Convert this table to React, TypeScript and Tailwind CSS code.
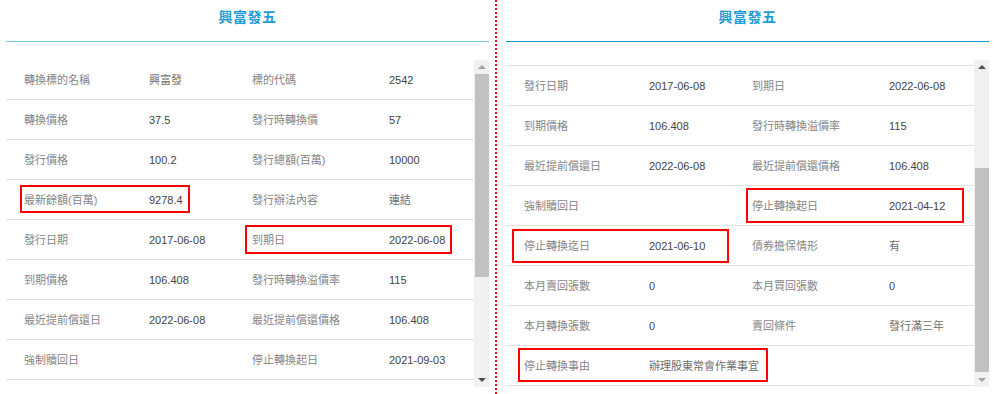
import React from "react";

type Row = { cells: [string, string, string, string]; box?: string };

const font = {
  fontFamily: '"Liberation Sans", "Noto Sans CJK TC", sans-serif',
};

const leftRows: Row[] = [
  { cells: ["轉換標的名稱", "興富發", "標的代碼", "2542"] },
  { cells: ["轉換價格", "37.5", "發行時轉換價", "57"] },
  { cells: ["發行價格", "100.2", "發行總額(百萬)", "10000"] },
  {
    cells: ["最新餘額(百萬)", "9278.4", "發行辦法內容", "連結"],
    box: "left-[14px] top-[5px] w-[170px] h-[28px]",
  },
  {
    cells: ["發行日期", "2017-06-08", "到期日", "2022-06-08"],
    box: "left-[239px] top-[5px] w-[207px] h-[29px]",
  },
  { cells: ["到期價格", "106.408", "發行時轉換溢價率", "115"] },
  { cells: ["最近提前償還日", "2022-06-08", "最近提前償還價格", "106.408"] },
  { cells: ["強制贖回日", "", "停止轉換起日", "2021-09-03"] },
];

const rightRows: Row[] = [
  { cells: ["發行日期", "2017-06-08", "到期日", "2022-06-08"] },
  { cells: ["到期價格", "106.408", "發行時轉換溢價率", "115"] },
  { cells: ["最近提前償還日", "2022-06-08", "最近提前償還價格", "106.408"] },
  {
    cells: ["強制贖回日", "", "停止轉換起日", "2021-04-12"],
    box: "left-[240px] top-[2px] w-[218px] h-[35px]",
  },
  {
    cells: ["停止轉換迄日", "2021-06-10", "債券擔保情形", "有"],
    box: "left-[6px] top-[3px] w-[217px] h-[34px]",
  },
  { cells: ["本月賣回張數", "0", "本月買回張數", "0"] },
  { cells: ["本月轉換張數", "0", "賣回條件", "發行滿三年"] },
  {
    cells: ["停止轉換事由", "辦理股東常會作業事宜", "", ""],
    box: "left-[12px] top-[2px] w-[250px] h-[34px]",
  },
];

const isCjk = (s: string) => /[^\x00-\x7F]/.test(s);

function Value({ text }: { text: string }) {
  return (
    <div
      className={`pl-[18px] ${isCjk(text) ? "text-[#6e6e6e]" : "text-[#444444]"}`}
    >
      {text}
    </div>
  );
}

function DataRow({ row }: { row: Row }) {
  const [a, b, c, d] = row.cells;
  return (
    <div className="relative grid grid-cols-[125px_103px_137px_103px] h-[40px] shrink-0 items-center border-b border-[#e2e2e2] text-[11px] leading-[14px] whitespace-nowrap">
      <div className="pl-[18px] text-[#858585]">{a}</div>
      <Value text={b} />
      <div className="pl-[18px] text-[#858585]">{c}</div>
      <Value text={d} />
      {row.box && (
        <div className={`absolute border-2 border-[#ff0000] ${row.box}`} />
      )}
    </div>
  );
}

function UpArrow({ color }: { color: string }) {
  return (
    <div className="h-[14px] flex items-center justify-center">
      <div
        className={`w-0 h-0 border-x-[4px] border-x-transparent border-b-[4px] ${color}`}
      />
    </div>
  );
}

function DownArrow({ color }: { color: string }) {
  return (
    <div className="h-[15px] flex items-center justify-center">
      <div
        className={`w-0 h-0 border-x-[4px] border-x-transparent border-t-[4px] ${color}`}
      />
    </div>
  );
}

function Panel({
  rows,
  lineColor,
  scrolled,
}: {
  rows: Row[];
  lineColor: string;
  scrolled: boolean;
}) {
  return (
    <div className="w-[483px] flex flex-col">
      <div className="h-[41px] flex justify-center items-start pt-[8px]">
        <span className="text-[14px] leading-[18px] font-bold text-[#1e9bd7] tracking-[0.5px]">
          興富發五
        </span>
      </div>
      <div className={`h-[1px] ${lineColor}`} />
      <div className="h-[18px]" />
      <div className="h-[327px] flex">
        <div className="w-[468px] overflow-hidden">
          <div className="flex flex-col">
            {scrolled && (
              <div className="h-[6px] shrink-0 border-b border-[#e2e2e2]" />
            )}
            {rows.map((r, i) => (
              <DataRow key={i} row={r} />
            ))}
          </div>
        </div>
        <div className="w-[15px] bg-[#f1f1f1] flex flex-col">
          {scrolled ? (
            <>
              <UpArrow color="border-b-[#505050]" />
              <div className="h-[94px]" />
              <div className="h-[204px] ml-[1px] bg-[#c1c1c1]" />
              <DownArrow color="border-t-[#a3a3a3]" />
            </>
          ) : (
            <>
              <UpArrow color="border-b-[#a3a3a3]" />
              <div className="h-[203px] ml-[1px] bg-[#c1c1c1]" />
              <div className="flex-1" />
              <DownArrow color="border-t-[#505050]" />
            </>
          )}
        </div>
      </div>
    </div>
  );
}

export default function App() {
  return (
    <div
      className="w-[1000px] h-[394px] bg-white flex overflow-hidden"
      style={font}
    >
      <div className="ml-[6px]">
        <Panel rows={leftRows} lineColor="bg-[#74cfef]" scrolled={false} />
      </div>
      <div className="w-[6px]" />
      <div className="w-[2px] h-[394px] border-l-2 border-dotted border-[#ee1111]" />
      <div className="w-[9px]" />
      <Panel rows={rightRows} lineColor="bg-[#1a94cf]" scrolled={true} />
    </div>
  );
}
